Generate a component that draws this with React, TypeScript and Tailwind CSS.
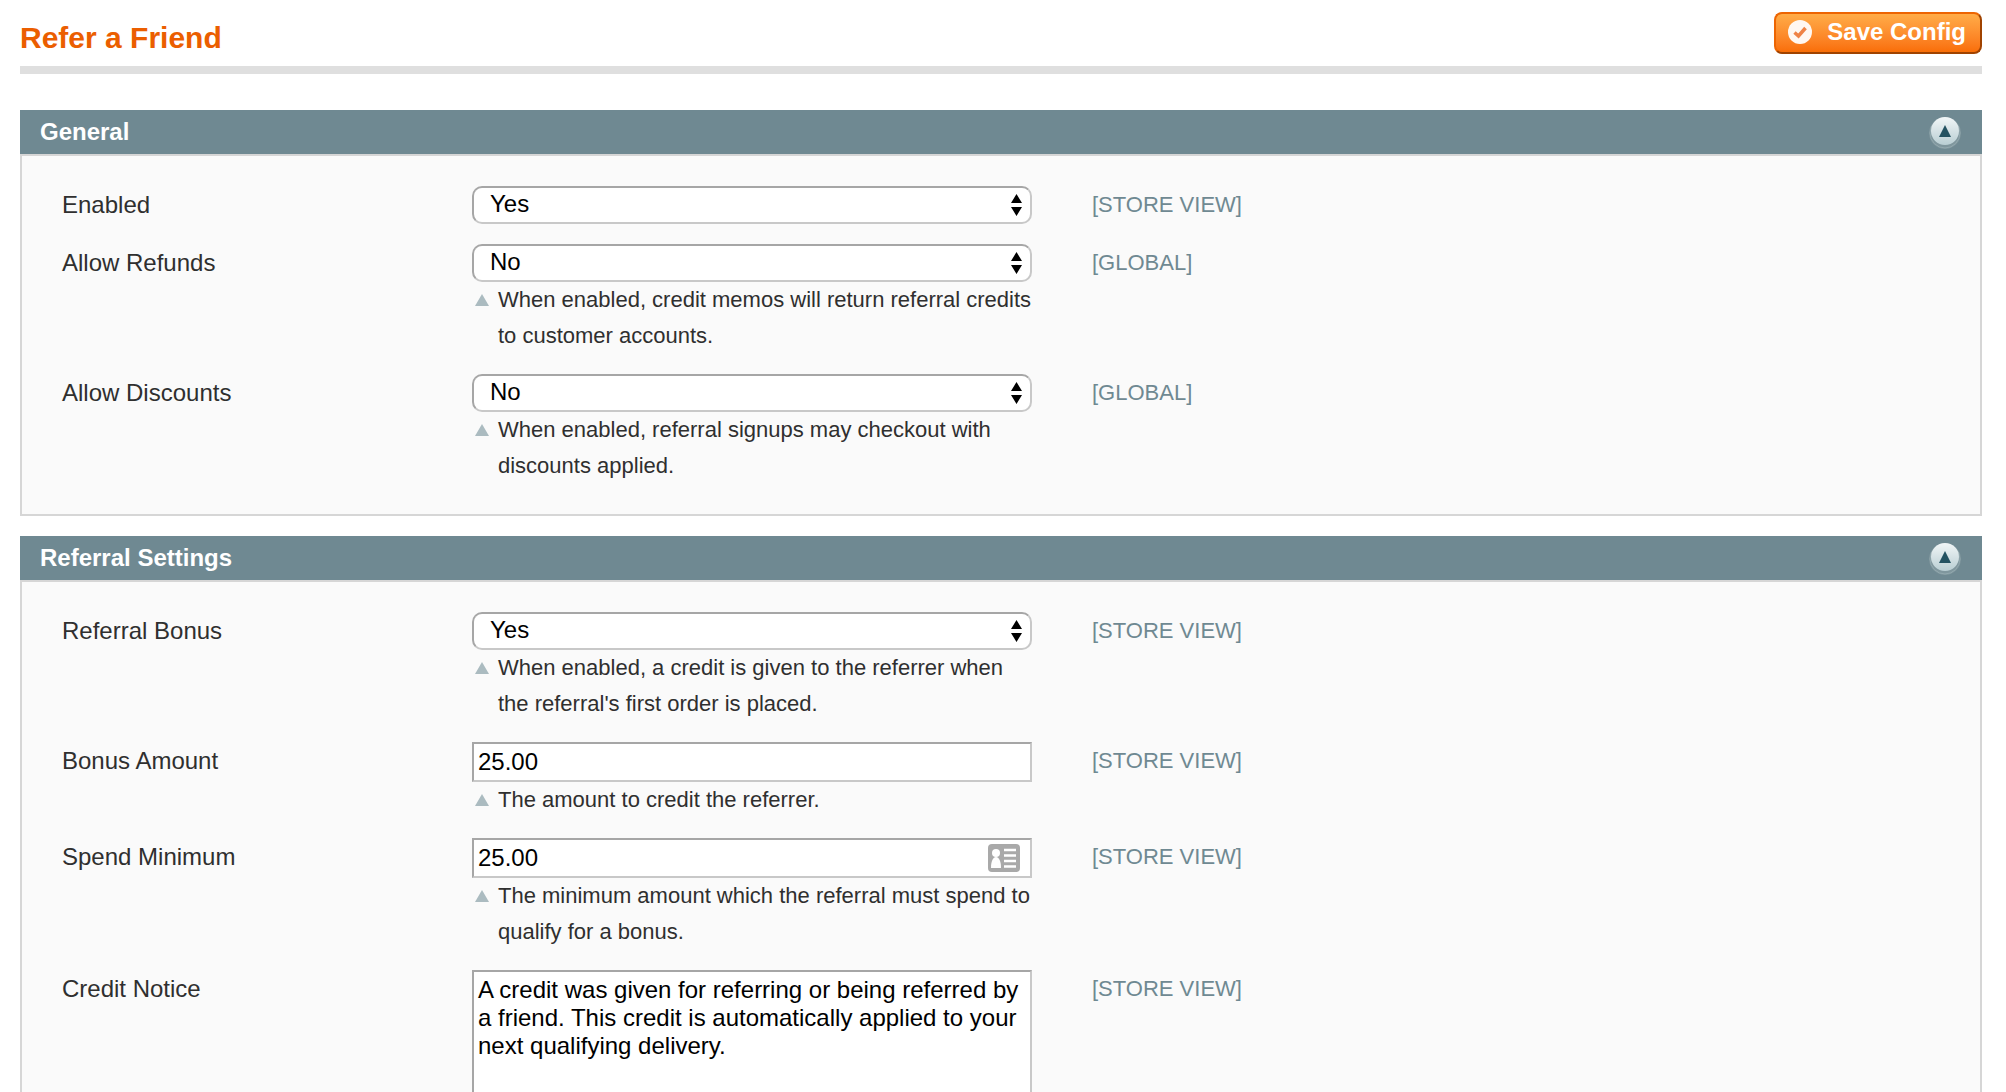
import { useState } from 'react';

type Field = {
  id: string;
  label: string;
  type: 'select' | 'text' | 'textarea';
  value: string;
  hint?: string;
  scope: string;
  contactIcon?: boolean;
};

const generalFields: Field[] = [
  { id: 'enabled', label: 'Enabled', type: 'select', value: 'Yes', scope: '[STORE VIEW]' },
  {
    id: 'allow_refunds',
    label: 'Allow Refunds',
    type: 'select',
    value: 'No',
    hint: 'When enabled, credit memos will return referral credits to customer accounts.',
    scope: '[GLOBAL]',
  },
  {
    id: 'allow_discounts',
    label: 'Allow Discounts',
    type: 'select',
    value: 'No',
    hint: 'When enabled, referral signups may checkout with discounts applied.',
    scope: '[GLOBAL]',
  },
];

const referralFields: Field[] = [
  {
    id: 'referral_bonus',
    label: 'Referral Bonus',
    type: 'select',
    value: 'Yes',
    hint: "When enabled, a credit is given to the referrer when the referral's first order is placed.",
    scope: '[STORE VIEW]',
  },
  {
    id: 'bonus_amount',
    label: 'Bonus Amount',
    type: 'text',
    value: '25.00',
    hint: 'The amount to credit the referrer.',
    scope: '[STORE VIEW]',
  },
  {
    id: 'spend_minimum',
    label: 'Spend Minimum',
    type: 'text',
    value: '25.00',
    hint: 'The minimum amount which the referral must spend to qualify for a bonus.',
    scope: '[STORE VIEW]',
    contactIcon: true,
  },
  {
    id: 'credit_notice',
    label: 'Credit Notice',
    type: 'textarea',
    value:
      'A credit was given for referring or being referred by a friend. This credit is automatically applied to your next qualifying delivery.',
    scope: '[STORE VIEW]',
  },
];

const boxBorder = 'border-2 border-t-[#a6a6a6] border-l-[#a6a6a6] border-r-[#c8c8c8] border-b-[#c8c8c8]';

function CheckIcon() {
  return (
    <svg className="size-6" viewBox="0 0 24 24" aria-hidden="true">
      <circle cx="12" cy="12" r="12" fill="#fff8f2" />
      <path d="M6.500 12.500l4 3.500 7-8" fill="none" stroke="#ef8346" strokeWidth="3.500" />
    </svg>
  );
}

function CollapseIcon() {
  return (
    <svg className="h-9 w-[34px]" viewBox="0 0 34 36" aria-hidden="true">
      <defs>
        <linearGradient id="knob" x1="0" y1="0" x2="0" y2="1">
          <stop offset="0" stopColor="#f1f6f7" />
          <stop offset="1" stopColor="#b9ced3" />
        </linearGradient>
      </defs>
      <circle cx="17" cy="19" r="16" fill="#7f969d" />
      <circle cx="17" cy="19" r="15" fill="none" stroke="#93a9af" strokeWidth="1" />
      <circle cx="17" cy="17" r="14" fill="url(#knob)" />
      <path d="M17 11l6 12H11z" fill="#235261" />
    </svg>
  );
}

function ContactIcon() {
  return (
    <svg className="h-7 w-8" viewBox="0 0 32 28" aria-hidden="true">
      <rect width="32" height="28" rx="4" fill="#a9a9a9" />
      <circle cx="8" cy="9" r="4" fill="#fff" />
      <path d="M3 24c0-7 2-11 5-11s5 4 5 11z" fill="#fff" />
      <path d="M16 6h12M16 11.500h12M16 17h12M16 22.500h12" stroke="#fff" strokeWidth="2.500" />
    </svg>
  );
}

function Control({ field }: { field: Field }) {
  const [value, setValue] = useState(field.value);

  if (field.type === 'select') {
    return (
      <div className="relative">
        <select
          id={field.id}
          value={value}
          onChange={(e) => setValue(e.target.value)}
          className={`block h-[38px] w-full appearance-none rounded-[10px] bg-white pr-8 pb-1 pl-4 text-2xl leading-8 text-black ${boxBorder}`}
        >
          <option>Yes</option>
          <option>No</option>
        </select>
        <svg className="pointer-events-none absolute top-2 right-2.5 h-[22px] w-[11px]" viewBox="0 0 11 22" aria-hidden="true">
          <path d="M5.500 0l5.500 9H0zM5.500 22l5.500-9H0z" fill="#000" />
        </svg>
      </div>
    );
  }

  if (field.type === 'textarea') {
    return (
      <textarea
        id={field.id}
        value={value}
        onChange={(e) => setValue(e.target.value)}
        className={`block h-[180px] w-full resize-none bg-white p-1 text-2xl leading-7 text-black ${boxBorder}`}
      />
    );
  }

  return (
    <div className="relative">
      <input
        id={field.id}
        type="text"
        value={value}
        onChange={(e) => setValue(e.target.value)}
        className={`block h-10 w-full bg-white px-1 text-2xl leading-8 text-black ${boxBorder}`}
      />
      {field.contactIcon && (
        <span className="pointer-events-none absolute top-1.5 right-3">
          <ContactIcon />
        </span>
      )}
    </div>
  );
}

function FieldRow({ field }: { field: Field }) {
  return (
    <div className="grid grid-cols-[410px_560px_1fr] items-start py-2.5">
      <label htmlFor={field.id} className="text-2xl leading-[38px] text-[#2f2f2f]">
        {field.label}
      </label>
      <div>
        <Control field={field} />
        {field.hint && (
          <p className="flex items-start gap-[9px] pl-[3px] text-[22px] leading-9 text-[#2f2f2f]">
            <svg className="mt-3 h-3 w-3.5 shrink-0" viewBox="0 0 14 12" aria-hidden="true">
              <path d="M7 0l7 12H0z" fill="#abbbc0" />
            </svg>
            <span className="-mr-1">{field.hint}</span>
          </p>
        )}
      </div>
      <span className="pl-[60px] text-[22px] leading-[38px] text-[#6f8992]">{field.scope}</span>
    </div>
  );
}

function Section({ title, fields }: { title: string; fields: Field[] }) {
  const [open, setOpen] = useState(true);

  return (
    <section>
      <button
        type="button"
        aria-expanded={open}
        onClick={() => setOpen(!open)}
        className="flex h-11 w-full items-center justify-between bg-[#6f8992] px-5 text-2xl font-bold text-white"
      >
        {title}
        <CollapseIcon />
      </button>
      {open && (
        <div className="border-2 border-[#d6d6d6] bg-[#fafafa] px-10 py-5">
          {fields.map((field) => (
            <FieldRow key={field.id} field={field} />
          ))}
        </div>
      )}
    </section>
  );
}

export default function App() {
  return (
    <main className="min-h-screen bg-white pt-3 pr-6 pb-5 pl-5 font-['Liberation_Sans',Arial,sans-serif]">
      <header className="flex items-start justify-between border-b-8 border-[#dfdfdf] pb-3">
        <h1 className="pt-2.5 text-[30px] leading-8 font-bold text-[#eb5e00]">Refer a Friend</h1>
        <button
          type="button"
          className="flex h-[42px] items-center gap-[15px] rounded-lg border-2 border-t-[#ed6502] border-r-[#a04300] border-b-[#a04300] border-l-[#ed6502] bg-linear-to-b from-[#ffac47] to-[#f96e06] pr-3.5 pb-0.5 pl-3 text-2xl leading-8 font-bold text-white"
        >
          <CheckIcon />
          Save Config
        </button>
      </header>
      <div className="flex flex-col gap-5 pt-9">
        <Section title="General" fields={generalFields} />
        <Section title="Referral Settings" fields={referralFields} />
      </div>
    </main>
  );
}
